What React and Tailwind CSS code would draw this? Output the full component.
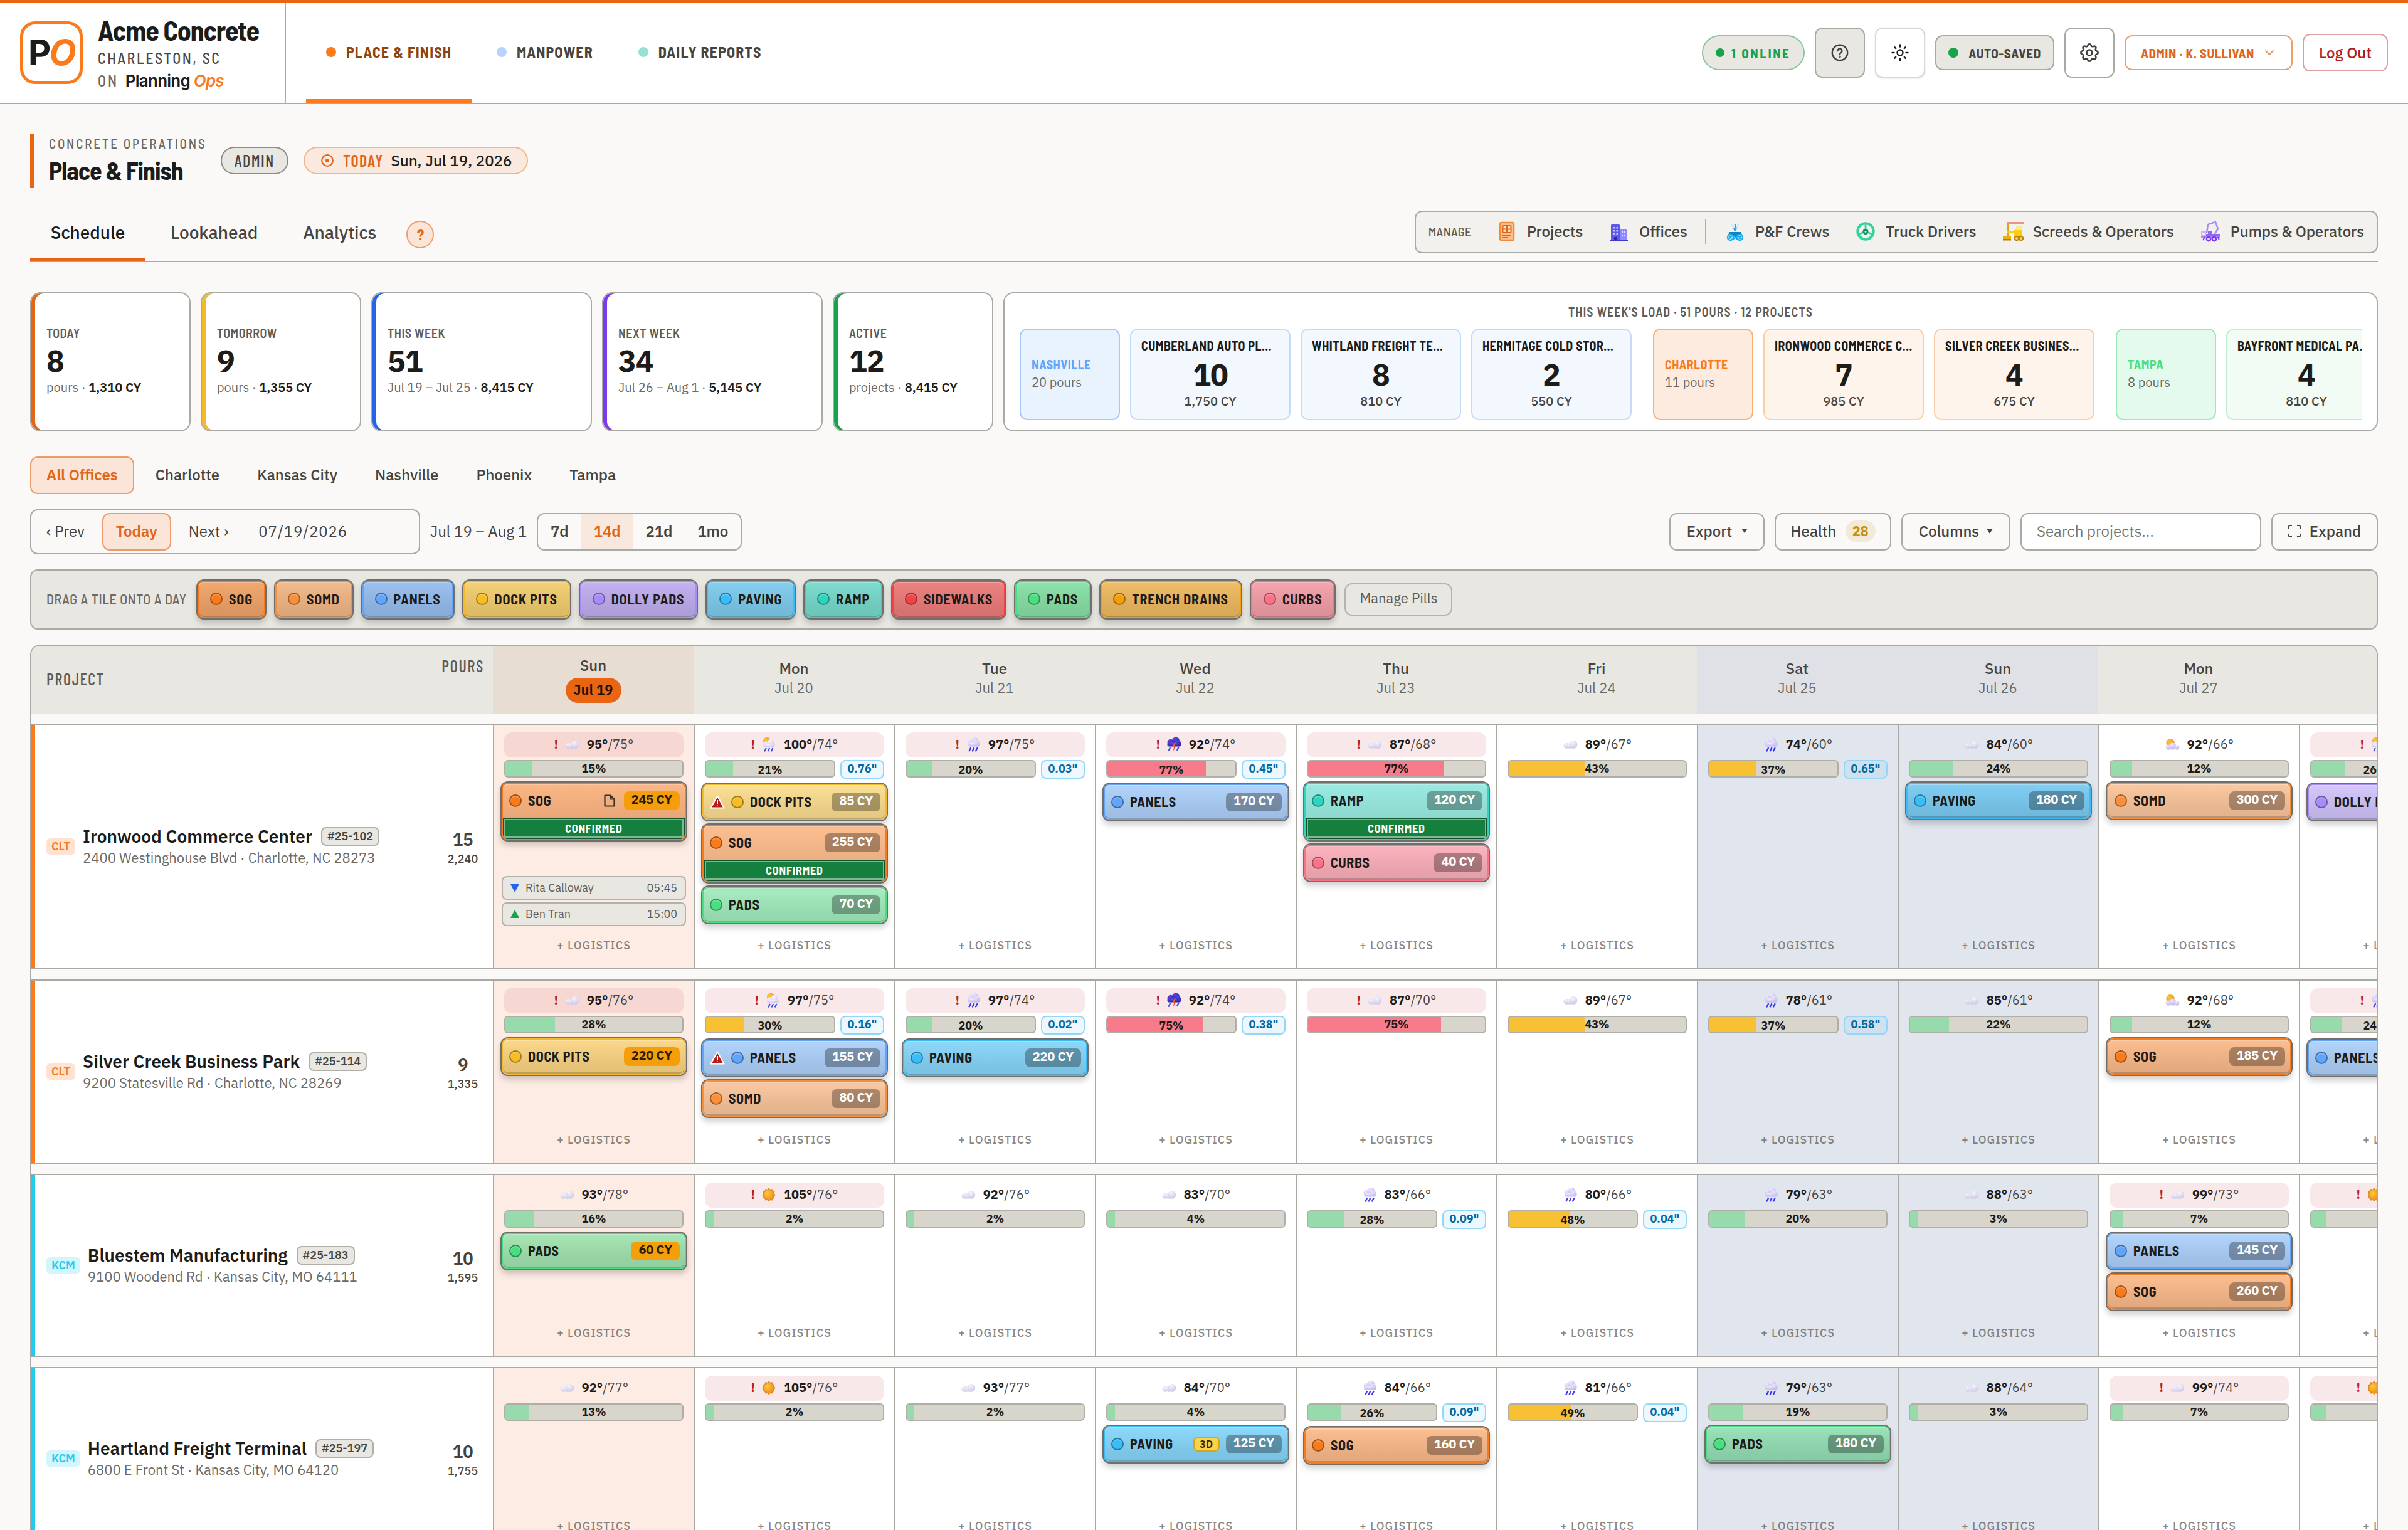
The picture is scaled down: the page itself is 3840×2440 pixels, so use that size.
const COND = "font-['Barlow_Condensed','Roboto',sans-serif] font-stretch-condensed";
const SEMI = "font-['Barlow_Semi_Condensed','Roboto',sans-serif]";

const TILE = {
  SOG: { edge: "border-[#f97a1a]", fill: "bg-[#f97a1a]", soft: "bg-[#f97a1a]/50", mid: "bg-[#f97a1a]/60" },
  SOMD: { edge: "border-[#f2903f]", fill: "bg-[#f98f3c]", soft: "bg-[#f98f3c]/50", mid: "bg-[#fb923c]/55" },
  PANELS: { edge: "border-[#60a5fa]", fill: "bg-[#60a5fa]", soft: "bg-[#60a5fa]/50", mid: "bg-[#60a5fa]/60" },
  "DOCK PITS": { edge: "border-[#f4b92a]", fill: "bg-[#f9bd24]", soft: "bg-[#fbbf24]/50", mid: "bg-[#fbbf24]/60" },
  "DOLLY PADS": { edge: "border-[#a78bfa]", fill: "bg-[#a78bfa]", soft: "bg-[#a78bfa]/50", mid: "bg-[#a78bfa]/60" },
  PAVING: { edge: "border-[#38bdf8]", fill: "bg-[#38bdf8]", soft: "bg-[#38bdf8]/60", mid: "bg-[#38bdf8]/60" },
  RAMP: { edge: "border-[#2dd4bf]", fill: "bg-[#2dd4bf]", soft: "bg-[#2dd4bf]/50", mid: "bg-[#2dd4bf]/60" },
  SIDEWALKS: { edge: "border-[#ef4444]", fill: "bg-[#ef4444]", soft: "bg-[#ef4444]/50", mid: "bg-[#ef4444]/65" },
  PADS: { edge: "border-[#4ade80]", fill: "bg-[#4ade80]", soft: "bg-[#4ade80]/50", mid: "bg-[#4ade80]/60" },
  "TRENCH DRAINS": { edge: "border-[#f59e0b]", fill: "bg-[#f59e0b]", soft: "bg-[#f59e0b]/50", mid: "bg-[#f59e0b]/60" },
  CURBS: { edge: "border-[#fb7185]", fill: "bg-[#fb7185]", soft: "bg-[#fb7185]/55", mid: "bg-[#fb7185]/60" },
};

const t = (name, cy, extra = {}) => ({ name, cy, ...extra });
const d = (icon, hi, lo, pct, rain, alert, tiles = [], extra = {}) => ({ icon, hi, lo, pct, rain, alert, tiles, ...extra });

const PROJECTS = [
  {
    code: "CLT", name: "Ironwood Commerce Center", num: "#25-102", addr: "2400 Westinghouse Blvd · Charlotte, NC 28273", pours: "15", cy: "2,240", height: "h-[392px]",
    days: [
      d("cloud", 95, 75, 15, null, true, [t("SOG", 245, { doc: true, confirmed: true })], { trucks: [["down", "Rita Calloway", "05:45"], ["up", "Ben Tran", "15:00"]] }),
      d("sunrain", 100, 74, 21, '0.76"', true, [t("DOCK PITS", 85, { warn: true }), t("SOG", 255, { confirmed: true }), t("PADS", 70)]),
      d("rain", 97, 75, 20, '0.03"', true),
      d("storm", 92, 74, 77, '0.45"', true, [t("PANELS", 170)]),
      d("cloud", 87, 68, 77, null, true, [t("RAMP", 120, { confirmed: true }), t("CURBS", 40)]),
      d("cloud", 89, 67, 43, null, false),
      d("rain", 74, 60, 37, '0.65"', false),
      d("cloud", 84, 60, 24, null, false, [t("PAVING", 180)]),
      d("suncloud", 92, 66, 12, null, false, [t("SOMD", 300)]),
      d("sunrain", 96, 71, 26, '0.12"', true, [t("DOLLY PADS", 90)]),
    ],
  },
  {
    code: "CLT", name: "Silver Creek Business Park", num: "#25-114", addr: "9200 Statesville Rd · Charlotte, NC 28269", pours: "9", cy: "1,335", height: "h-[294px]",
    days: [
      d("cloud", 95, 76, 28, null, true, [t("DOCK PITS", 220)]),
      d("sunrain", 97, 75, 30, '0.16"', true, [t("PANELS", 155, { warn: true }), t("SOMD", 80)]),
      d("rain", 97, 74, 20, '0.02"', true, [t("PAVING", 220)]),
      d("storm", 92, 74, 75, '0.38"', true),
      d("cloud", 87, 70, 75, null, true),
      d("cloud", 89, 67, 43, null, false),
      d("rain", 78, 61, 37, '0.58"', false),
      d("cloud", 85, 61, 22, null, false),
      d("suncloud", 92, 68, 12, null, false, [t("SOG", 185)]),
      d("rain", 96, 72, 24, '0.10"', true, [t("PANELS", 140)]),
    ],
  },
  {
    code: "KCM", name: "Bluestem Manufacturing", num: "#25-183", addr: "9100 Woodend Rd · Kansas City, MO 64111", pours: "10", cy: "1,595", height: "h-[292px]",
    days: [
      d("cloud", 93, 78, 16, null, false, [t("PADS", 60)]),
      d("sun", 105, 76, 2, null, true),
      d("cloud", 92, 76, 2, null, false),
      d("cloud", 83, 70, 4, null, false),
      d("rain", 83, 66, 28, '0.09"', false),
      d("rain", 80, 66, 48, '0.04"', false),
      d("rain", 79, 63, 20, null, false),
      d("cloud", 88, 63, 3, null, false),
      d("cloud", 99, 73, 7, null, true, [t("PANELS", 145), t("SOG", 260)]),
      d("sun", 101, 75, 8, null, true),
    ],
  },
  {
    code: "KCM", name: "Heartland Freight Terminal", num: "#25-197", addr: "6800 E Front St · Kansas City, MO 64120", pours: "10", cy: "1,755", height: "h-[292px]",
    days: [
      d("cloud", 92, 77, 13, null, false),
      d("sun", 105, 76, 2, null, true),
      d("cloud", 93, 77, 2, null, false),
      d("cloud", 84, 70, 4, null, false, [t("PAVING", 125, { threeD: true })]),
      d("rain", 84, 66, 26, '0.09"', false, [t("SOG", 160)]),
      d("rain", 81, 66, 49, '0.04"', false),
      d("rain", 79, 63, 19, null, false, [t("PADS", 180)]),
      d("cloud", 88, 64, 3, null, false),
      d("cloud", 99, 74, 7, null, true),
      d("sun", 101, 75, 8, null, true),
    ],
  },
];

const HEAD = [["Sun", "Jul 19"], ["Mon", "Jul 20"], ["Tue", "Jul 21"], ["Wed", "Jul 22"], ["Thu", "Jul 23"], ["Fri", "Jul 24"], ["Sat", "Jul 25"], ["Sun", "Jul 26"], ["Mon", "Jul 27"], ["Tue", "Jul 28"]];

function Defs() {
  return (
    <svg className="absolute size-0" aria-hidden="true">
      <defs>
        <radialGradient id="cloudA" cx="0.4" cy="0.25" r="0.8"><stop offset="0" stopColor="#f7f5fb" /><stop offset="1" stopColor="#cbc4e8" /></radialGradient>
        <radialGradient id="cloudB" cx="0.35" cy="0.2" r="0.9"><stop offset="0" stopColor="#efe9fb" /><stop offset="1" stopColor="#bdb2ee" /></radialGradient>
        <radialGradient id="stormA" cx="0.4" cy="0.2" r="0.9"><stop offset="0" stopColor="#5a48d8" /><stop offset="1" stopColor="#2b1fa8" /></radialGradient>
        <radialGradient id="sunA" cx="0.35" cy="0.35" r="0.8"><stop offset="0" stopColor="#fbc83a" /><stop offset="1" stopColor="#ee8a1c" /></radialGradient>
      </defs>
    </svg>
  );
}

function Weather({ kind }) {
  return (
    <svg viewBox="0 0 32 32" className="size-6 shrink-0">
      {kind === "cloud" && (
        <g fill="url(#cloudA)"><circle cx="8" cy="19" r="6" /><circle cx="15" cy="19" r="6" /><circle cx="22.500" cy="16.500" r="8.500" /></g>
      )}
      {kind === "sun" && (
        <g><path d="M16 2l3 3 4-1 1.500 4 4 1.500-1 4 3 3-3 3 1 4-4 1.500-1.500 4-4-1-3 3-3-3-4 1-1.500-4-4-1.500 1-4-3-3 3-3-1-4 4-1.500L8.500 4l4 1z" fill="#e08a1e" /><circle cx="16" cy="16.500" r="10.500" fill="url(#sunA)" /></g>
      )}
      {kind === "suncloud" && (
        <g><circle cx="12" cy="13" r="9" fill="url(#sunA)" /><g fill="url(#cloudB)"><circle cx="8" cy="22" r="5.500" /><circle cx="17" cy="20" r="7.500" /><circle cx="26" cy="22.500" r="5" /></g></g>
      )}
      {kind === "sunrain" && (
        <g><circle cx="12" cy="9" r="8" fill="url(#sunA)" /><g fill="url(#cloudA)"><circle cx="10" cy="15" r="5.500" /><circle cx="20" cy="13" r="8" /><rect x="4" y="14" width="25" height="8" rx="4" /></g><path d="M10 25l-2.500 5M17 25l-2.500 5M24 25l-2.500 5" stroke="#4a4fe0" strokeWidth="3" strokeLinecap="round" /></g>
      )}
      {kind === "rain" && (
        <g><g fill="url(#cloudB)"><circle cx="10" cy="12" r="6.500" /><circle cx="19" cy="9" r="8" /><circle cx="24" cy="14" r="6" /><rect x="4" y="12" width="26" height="8.500" rx="4" /></g><path d="M10.500 24l-3 6M17.500 24l-3 6M24.500 24l-3 6" stroke="#3d3df0" strokeWidth="3.200" strokeLinecap="round" /></g>
      )}
      {kind === "storm" && (
        <g><g fill="url(#stormA)"><circle cx="9" cy="12" r="7" /><circle cx="20" cy="8.500" r="8" /><circle cx="25" cy="14" r="6" /><rect x="2" y="12" width="29" height="8.500" rx="4" /></g><path d="M17 13l-5 9h4l-2 9 7-11h-4l3-7z" fill="#f0563a" /><path d="M8 23l-3 6M26 22l-3 6" stroke="#4a4fe8" strokeWidth="3" strokeLinecap="round" /></g>
      )}
    </svg>
  );
}

function ManageIcon({ kind }) {
  return (
    <svg viewBox="0 0 36 36" className="size-9 shrink-0">
      {kind === "projects" && (
        <g><rect x="7" y="4" width="22" height="28" rx="2.500" fill="#ffc08a" stroke="#f28a3c" strokeWidth="2.500" /><rect x="11.500" y="9" width="13" height="11" rx="1.500" fill="#ffe2c7" stroke="#e0661a" strokeWidth="2" /><path d="M18 9v11M11.500 14.500h13" stroke="#e0661a" strokeWidth="2" /><path d="M12 24.500h11M12 28h7" stroke="#e0661a" strokeWidth="2" strokeLinecap="round" /></g>
      )}
      {kind === "offices" && (
        <g><path d="M5 8.500a2 2 0 0 1 2-2h10a2 2 0 0 1 2 2V32H5z" fill="#5b5be6" /><path d="M19 14h9a2 2 0 0 1 2 2v16H19z" fill="#8f8bff" /><path d="M8.500 11h2.500v2.500H8.500zM13.500 11H16v2.500h-2.500zM8.500 16h2.500v2.500H8.500zM13.500 16H16v2.500h-2.500zM8.500 21h2.500v2.500H8.500zM13.500 21H16v2.500h-2.500z" fill="#c7c6ff" /><path d="M22 18h2v2.500h-2zM26 18h2v2.500h-2zM22 23h2v2.500h-2zM26 23h2v2.500h-2z" fill="#e6e5ff" /><path d="M10 27h4.500v5H10z" fill="#2f2aa0" /><path d="M4 31h28v2.500H4z" fill="#4038c8" /></g>
      )}
      {kind === "crews" && (
        <g><path d="M18 6v9" stroke="#2aa3ea" strokeWidth="2.200" /><path d="M12.500 6l4 8M23.500 6l-4 8" stroke="#c5e9fc" strokeWidth="2" /><path d="M15 12h6l-1.500 6h-3z" fill="#2aa3ea" /><path d="M9 19h18l3 6H6z" fill="#1183c4" /><g fill="#bfe9ff" stroke="#1bb0f0" strokeWidth="2.500"><circle cx="10.500" cy="27.500" r="4.500" /><circle cx="25.500" cy="27.500" r="4.500" /></g><path d="M15 24.500l6 6M21 24.500l-6 6M8.500 25.500l4 4M12.500 25.500l-4 4M23.500 25.500l4 4M27.500 25.500l-4 4" stroke="#0ea5e9" strokeWidth="1.800" /></g>
      )}
      {kind === "drivers" && (
        <g fill="none"><circle cx="18" cy="18" r="12.700" stroke="#34d39c" strokeWidth="4" /><path d="M18 6v9M7 22.500l8-3M29 22.500l-8-3" stroke="#34d39c" strokeWidth="2.800" /><circle cx="18" cy="18.500" r="4.500" fill="#0b8f66" /><circle cx="18" cy="18.500" r="1.500" fill="#bff3df" /></g>
      )}
      {kind === "screeds" && (
        <g><path d="M9 4.500h26" stroke="#f2706a" strokeWidth="2.500" /><path d="M10 5v20" stroke="#e0a21a" strokeWidth="2.500" /><path d="M9 17h10l4-2h10v12H20v-6H9z" fill="#facc15" /><path d="M23 10h9v6h-9z" fill="#fdea8a" /><path d="M2 26h13v5H2z" fill="#eab308" /><path d="M2 30h13v2.500H2z" fill="#b07d0a" /><g fill="#f5d76a" stroke="#b8860b" strokeWidth="2.200"><circle cx="24" cy="29" r="3.200" /><circle cx="31" cy="29" r="3.200" /></g></g>
      )}
      {kind === "pumps" && (
        <g><path d="M12 21L14 7l12-4 4 11-6 9" fill="none" stroke="#a78bfa" strokeWidth="2.500" strokeLinejoin="round" /><path d="M3 18h8v9H3z" fill="#c4b5fd" /><path d="M5 20h4v3H5z" fill="#f0ebff" /><path d="M11 22h22v5H11zM14 17h7v6h-7z" fill="#9269f5" /><path d="M3 25h30v3H3z" fill="#a78bfa" /><path d="M9 27l-3 5M30 27l2 5" stroke="#7c3aed" strokeWidth="2" /><g fill="#ddd2ff" stroke="#7c3aed" strokeWidth="2.400"><circle cx="15" cy="30" r="3.200" /><circle cx="24" cy="30" r="3.200" /></g></g>
      )}
    </svg>
  );
}

function Header() {
  return (
    <header className="flex h-[166px] items-stretch border-t-4 border-b-2 border-t-[#ea6513] border-b-[#a9a9a5] bg-white">
      <div className="flex w-[456px] items-center gap-6 border-r-2 border-[#a9a9a5] pl-8">
        <div className="flex size-[100px] items-center justify-center rounded-3xl border-[5px] border-[#fb7a1c] bg-white font-['Inter',sans-serif] text-[56px] leading-none font-bold tracking-[-0.05em] text-[#1c1c1a]">
          P<span className="text-[#fb7a1c] italic">O</span>
        </div>
        <div className="flex flex-col whitespace-nowrap">
          <div className={`${SEMI} flex h-[54px] items-center text-[44px] font-bold tracking-[-0.025em] text-[#1c1c1a]`}>Acme Concrete</div>
          <div className={`${SEMI} flex h-9 items-center text-[24px] font-medium tracking-[0.105em] text-[#4a4a46]`}>CHARLESTON, SC</div>
          <div className={`${SEMI} flex h-9 items-center gap-2 text-[24px] font-medium tracking-[0.12em] text-[#6b6a66]`}>
            ON
            <span className="ml-[3px] font-['Inter',sans-serif] text-[26px] font-semibold tracking-[-0.03em] text-[#1c1c1a]">Planning <span className="text-[#fb7a1c] italic">Ops</span></span>
          </div>
        </div>
      </div>
      <nav className={`${SEMI} ml-8 flex items-stretch gap-2 text-[24px] font-bold tracking-[0.047em] whitespace-nowrap text-[#45443f]`}>
        {[["PLACE & FINISH", "bg-[#fb7a1c]", true], ["MANPOWER", "bg-[#b7d5fb]"], ["DAILY REPORTS", "bg-[#97e0d2]"]].map(([label, dot, on]) => (
          <div key={label} className={`flex items-center gap-4 border-b-[6px] px-8 pt-1 ${on ? "w-[264px] border-[#fb7a1c] text-[#8f430d]" : "border-transparent"}`}>
            <span className={`size-4 shrink-0 rounded-full ${dot}`} />{label}
          </div>
        ))}
      </nav>
      <div className={`${SEMI} ml-auto flex items-center gap-4 pr-8 font-bold whitespace-nowrap`}>
        <div className="flex h-14 w-[164px] items-center gap-[11px] rounded-full border-2 border-[#86c7a0] bg-[#e8e7e2] pl-5 text-[21px] tracking-[0.125em] text-[#16a34a]"><span className="size-3.5 rounded-full bg-[#16a34a]" />1 ONLINE</div>
        <div className="flex size-20 items-center justify-center rounded-xl border-2 border-[#a9a9a5] bg-[#e8e7e2] text-[#3f3e3a]">
          <svg viewBox="0 0 28 28" className="size-7" fill="none" stroke="currentColor" strokeWidth="2.400" strokeLinecap="round"><circle cx="14" cy="14" r="12.200" /><path d="M10.500 11a3.500 3.500 0 1 1 5.400 3c-1.300.8-1.900 1.400-1.900 2.700" /><circle cx="14" cy="20.300" r="0.600" fill="currentColor" /></svg>
        </div>
        <div className="flex size-20 items-center justify-center rounded-xl border-2 border-[#d8d8d6] bg-white text-[#1c1c1a] shadow-sm">
          <svg viewBox="0 0 28 28" className="size-7" fill="none" stroke="currentColor" strokeWidth="2.400" strokeLinecap="round"><circle cx="14" cy="14" r="4.500" /><path d="M14 1.500v3M14 23.500v3M1.500 14h3M23.500 14h3M5.200 5.200l2 2M20.800 20.800l2 2M5.200 22.800l2-2M20.800 7.200l2-2" /></svg>
        </div>
        <div className="flex h-14 w-[190px] items-center justify-center gap-4 rounded-xl border-2 border-[#a9a9a5] bg-[#e8e7e2] text-[21px] tracking-[0.03em] text-[#45443f]"><span className="size-4 rounded-full bg-[#16a34a]" />AUTO-SAVED</div>
        <div className="flex size-20 items-center justify-center rounded-xl border-2 border-[#a9a9a5] bg-white text-[#3f3e3a]">
          <svg viewBox="0 0 24 24" className="size-9" fill="none" stroke="currentColor" strokeWidth="1.700" strokeLinejoin="round"><circle cx="12" cy="12" r="3" /><path d="M10.300 3.500c.4-1.700 3-1.700 3.400 0a1.750 1.750 0 0 0 2.600 1.100c1.500-.9 3.300.8 2.400 2.400a1.750 1.750 0 0 0 1.100 2.600c1.700.4 1.700 3 0 3.400a1.750 1.750 0 0 0-1.100 2.600c.9 1.500-.8 3.300-2.400 2.400a1.750 1.750 0 0 0-2.600 1.100c-.4 1.700-3 1.700-3.400 0a1.750 1.750 0 0 0-2.600-1.100c-1.500.9-3.300-.8-2.400-2.400a1.750 1.750 0 0 0-1.100-2.600c-1.700-.4-1.700-3 0-3.400a1.750 1.750 0 0 0 1.100-2.600c-.9-1.500.8-3.300 2.400-2.400 1 .6 2.300.1 2.600-1.100z" transform="translate(0 0.700)" /></svg>
        </div>
        <div className="flex h-14 w-[268px] items-center gap-4 rounded-xl border-2 border-[#eba06a] bg-white pl-6 text-[21px] tracking-[0.023em] text-[#e0661a]">ADMIN · K. SULLIVAN
          <svg viewBox="0 0 16 10" className="h-2.5 w-4" fill="none" stroke="#e8935c" strokeWidth="2" strokeLinecap="round" strokeLinejoin="round"><path d="M2 2l6 6 6-6" /></svg>
        </div>
        <div className="flex h-[60px] w-[136px] items-center justify-center rounded-xl border-2 border-[#dca0a4] bg-white font-['IBM_Plex_Sans','Noto_Sans',sans-serif] text-[24px] font-medium text-[#b01c22]">Log Out</div>
      </div>
    </header>
  );
}

function TitleRow() {
  return (
    <div className="mt-12 flex h-[86px] items-center gap-6">
      <div className="flex w-[280px] flex-col border-l-[6px] border-[#ea6513] pl-6 whitespace-nowrap">
        <div className={`${SEMI} flex h-7 items-center text-[21px] font-medium tracking-[0.133em] text-[#6b6a66]`}>CONCRETE OPERATIONS</div>
        <h1 className={`${SEMI} flex h-[58px] items-center text-[40px] font-bold tracking-[-0.025em] text-[#1c1c1a]`}>Place & Finish</h1>
      </div>
      <div className={`${COND} -mt-0.5 flex h-11 w-[108px] items-center justify-center rounded-full border-2 border-[#8c8b86] bg-[#e8e7e2] text-[26px] font-medium tracking-[0.06em] text-[#45443f]`}>ADMIN</div>
      <div className={`${COND} -mt-0.5 flex h-11 w-[358px] items-center gap-[15px] rounded-full border-2 border-[#f0b78c] bg-[#f9e9de] pl-[26px] text-[26px] font-semibold tracking-[0.053em] whitespace-nowrap text-[#e0661a]`}>
        <svg viewBox="0 0 20 20" className="size-5" fill="none" stroke="currentColor" strokeWidth="2.200"><circle cx="10" cy="10" r="8.800" /><circle cx="10" cy="10" r="3" fill="currentColor" stroke="none" /></svg>
        TODAY<span className="-ml-[3px] font-['IBM_Plex_Sans','Noto_Sans',sans-serif] text-[24px] font-medium tracking-normal text-[#1c1c1a]">Sun, Jul 19, 2026</span>
      </div>
    </div>
  );
}

function TabRow() {
  return (
    <div className="mt-9 flex h-[82px] items-start border-b-2 border-[#a9a9a5]">
      <div className="-mb-0.5 flex h-20 items-stretch gap-2 text-[28px] font-medium tracking-[-0.003em] text-[#45443f]">
        <div className="flex w-[184px] items-center justify-center border-b-4 border-[#ea6513] pb-1.5 text-[#1c1c1a]">Schedule</div>
        <div className="flex items-center border-b-4 border-transparent px-8 pb-1.5">Lookahead</div>
        <div className="flex items-center border-b-4 border-transparent px-8 pb-1.5">Analytics</div>
        <div className={`${SEMI} -mt-1 ml-2 flex size-11 items-center justify-center self-center rounded-full border-2 border-[#ee9c6a] bg-[#fbe5d8] text-[24px] font-bold text-[#e0661a]`}>?</div>
      </div>
      <div className="ml-auto flex h-[68px] items-center gap-2 rounded-xl border-2 border-[#a9a9a5] bg-[#f2f1ed] pr-1 pb-0.5 pl-5 text-[24px] font-medium tracking-[-0.003em] text-[#45443f]">
        <span className={`${SEMI} mr-3.5 text-[20px] font-medium tracking-[0.025em] text-[#5d5c57]`}>MANAGE</span>
        <ManageItem icon="projects" label="Projects" />
        <ManageItem icon="offices" label="Offices" />
        <span className="mx-1 h-10 w-0.5 bg-[#b0b0ab]" />
        <ManageItem icon="crews" label="P&F Crews" />
        <ManageItem icon="drivers" label="Truck Drivers" />
        <ManageItem icon="screeds" label="Screeds & Operators" />
        <ManageItem icon="pumps" label="Pumps & Operators" />
      </div>
    </div>
  );
}

function ManageItem({ icon, label }) {
  return <div className="flex items-center gap-3.5 px-4 whitespace-nowrap"><ManageIcon kind={icon} />{label}</div>;
}

function Stat({ label, value, note, cy, wide, accent }) {
  return (
    <div className={`flex flex-col justify-center rounded-2xl border-2 border-[#a9a9a5] bg-white pb-1 pl-6 whitespace-nowrap ${wide ? "w-[352px]" : "w-64"} ${accent}`}>
      <div className={`${SEMI} mb-1.5 flex h-6 items-center text-[20px] font-semibold tracking-[0.025em] text-[#5d5c57]`}>{label}</div>
      <div className="mb-1 flex h-[52px] items-center text-[48px] font-bold tracking-[-0.02em] text-[#1c1c1a]">{value}</div>
      <div className="flex h-[26px] items-center text-[20px] text-[#6b6a66]">{note} ·&nbsp;<span className="font-semibold text-[#1c1c1a]">{cy} CY</span></div>
    </div>
  );
}

const LOADS = [
  { office: "NASHVILLE", pours: "20 pours", head: "border-[#a6c9f6] bg-[#e8f3fd]", text: "text-[#60a5fa]", tile: "border-[#c5dbf7] bg-[#f3f8fe]", items: [["CUMBERLAND AUTO PL…", "10", "1,750"], ["WHITLAND FREIGHT TE…", "8", "810"], ["HERMITAGE COLD STOR…", "2", "550"]] },
  { office: "CHARLOTTE", pours: "11 pours", head: "border-[#f8b07a] bg-[#feebe0]", text: "text-[#f97a1a]", tile: "border-[#f9cfab] bg-[#fff4ec]", items: [["IRONWOOD COMMERCE C…", "7", "985"], ["SILVER CREEK BUSINES…", "4", "675"]] },
  { office: "TAMPA", pours: "8 pours", head: "border-[#9be8b8] bg-[#e4faec]", text: "text-[#4ade80]", tile: "border-[#bdefcf] bg-[#f2fcf5]", items: [["BAYFRONT MEDICAL PA…", "4", "810"]] },
];

function Stats() {
  return (
    <div className="mt-12 flex h-[222px] items-stretch gap-4">
      <Stat label="TODAY" value="8" note="pours" cy="1,310" accent="shadow-[inset_6px_0_0_#e0661a]" />
      <Stat label="TOMORROW" value="9" note="pours" cy="1,355" accent="shadow-[inset_6px_0_0_#f5b92a]" />
      <Stat wide label="THIS WEEK" value="51" note="Jul 19 – Jul 25" cy="8,415" accent="shadow-[inset_6px_0_0_#2563eb]" />
      <Stat wide label="NEXT WEEK" value="34" note="Jul 26 – Aug 1" cy="5,145" accent="shadow-[inset_6px_0_0_#7c3aed]" />
      <Stat label="ACTIVE" value="12" note="projects" cy="8,415" accent="shadow-[inset_6px_0_0_#16a34a]" />
      <div className="flex min-w-0 flex-1 flex-col rounded-2xl border-2 border-[#a9a9a5] bg-white px-6 pt-3.5 pb-4">
        <div className={`${SEMI} mb-3 flex h-[30px] items-center justify-center text-[20px] font-semibold tracking-[0.05em] text-[#5d5c57]`}>THIS WEEK'S LOAD · 51 POURS · 12 PROJECTS</div>
        <div className="flex min-w-0 flex-1 gap-[34px] overflow-hidden">
          {LOADS.map((g) => (
            <div key={g.office} className="flex shrink-0 gap-4">
              <div className={`flex w-40 flex-col justify-center gap-1 rounded-xl border-2 pb-0.5 pl-[17px] ${g.head}`}>
                <div className={`${SEMI} flex h-6 items-center text-[20px] font-bold tracking-[0.025em] ${g.text}`}>{g.office}</div>
                <div className="flex h-[26px] items-center text-[20px] text-[#6b6a66]">{g.pours}</div>
              </div>
              {g.items.map(([name, n, cy]) => (
                <div key={name} className={`flex w-64 flex-col items-center justify-center rounded-xl border-2 pb-0.5 ${g.tile}`}>
                  <div className={`${SEMI} mb-2 flex h-6 w-full items-center pl-4 text-[20px] font-bold tracking-[0.025em] whitespace-nowrap text-[#1c1c1a]`}>{name}</div>
                  <div className="mb-1 flex h-[52px] items-center text-[48px] font-bold tracking-[-0.02em] text-[#1c1c1a]">{n}</div>
                  <div className="flex h-[26px] items-center text-[20px] font-medium text-[#45443f]">{cy} CY</div>
                </div>
              ))}
            </div>
          ))}
        </div>
      </div>
    </div>
  );
}

function Offices() {
  return (
    <div className="mt-10 flex h-[60px] items-center gap-2 text-[24px] font-medium text-[#45443f]">
      <div className="flex h-[60px] items-center rounded-xl border-2 border-[#ec9c6a] bg-[#fae5d8] px-6 pb-0.5 font-semibold text-[#e0661a]">All Offices</div>
      {["Charlotte", "Kansas City", "Nashville", "Phoenix", "Tampa"].map((o) => <div key={o} className="px-[26px] pb-0.5">{o}</div>)}
    </div>
  );
}

const CONTROL = "flex h-[60px] shrink-0 items-center justify-center rounded-xl border-2 border-[#a9a9a5] pb-0.5 text-[24px] font-medium text-[#45443f]";

function Toolbar() {
  return (
    <div className="mt-6 flex h-[72px] items-center gap-4 text-[24px] whitespace-nowrap text-[#45443f]">
      <div className="flex h-[72px] w-[622px] items-center gap-2 rounded-xl border-2 border-[#a9a9a5] px-1">
        <div className="px-5 pb-0.5">‹ Prev</div>
        <div className="flex h-[60px] items-center rounded-xl border-2 border-[#ec9c6a] bg-[#fae5d8] px-5 pb-0.5 font-semibold text-[#e0661a]">Today</div>
        <div className="px-5 pb-0.5">Next ›</div>
        <div className="pb-0.5 pl-5 tracking-[0.034em]">07/19/2026</div>
      </div>
      <div className="pb-0.5">Jul 19 – Aug 1</div>
      <div className="flex h-[60px] items-stretch overflow-hidden rounded-xl border-2 border-[#a9a9a5] font-semibold tracking-[-0.005em]">
        {["7d", "14d", "21d", "1mo"].map((r) => <div key={r} className={`flex items-center px-5 pb-0.5 ${r === "14d" ? "bg-[#f8e8dd] text-[#e0661a]" : ""}`}>{r}</div>)}
      </div>
      <div className="ml-auto flex gap-4">
        <div className={`${CONTROL} w-[152px] gap-4`}>Export<svg viewBox="0 0 8 8" className="size-2"><path d="M0 1h8L4 7z" fill="currentColor" /></svg></div>
        <div className={`${CONTROL} w-[186px] gap-3.5`}>Health<span className="flex h-[34px] w-12 items-center justify-center rounded-full bg-[#f1ead8] text-[22px] font-bold tracking-[-0.02em] text-[#c9900f]">28</span></div>
        <div className={`${CONTROL} w-[174px] gap-3`}>Columns<svg viewBox="0 0 10 10" className="size-2.5"><path d="M0 1h10L5 9z" fill="currentColor" /></svg></div>
        <div className="flex h-[60px] w-96 items-center rounded-xl border-2 border-[#a9a9a5] bg-white pb-0.5 pl-6 text-[#757570]">Search projects...</div>
        <div className={`${CONTROL} w-[170px] gap-3.5`}>
          <svg viewBox="0 0 20 20" className="size-5" fill="none" stroke="currentColor" strokeWidth="2"><path d="M1 6V3a2 2 0 0 1 2-2h3M14 1h3a2 2 0 0 1 2 2v3M19 14v3a2 2 0 0 1-2 2h-3M6 19H3a2 2 0 0 1-2-2v-3" /></svg>
          Expand
        </div>
      </div>
    </div>
  );
}

function Dot({ name }) {
  return <span className={`size-5 shrink-0 rounded-full border-2 border-black/35 shadow-[inset_0_2px_1px_rgba(255,255,255,0.25)] ${TILE[name].fill}`} />;
}

const GLOSS = "bg-linear-to-b from-white/5 to-black/10";
const RAISED = "shadow-[0_0_0_2px_#706f6b,0_6px_10px_2px_rgba(0,0,0,0.18),inset_0_2px_0_rgba(255,255,255,0.25),inset_0_-2px_0_rgba(0,0,0,0.18)]";

function Palette() {
  return (
    <div className="mt-6 flex h-24 items-center gap-4 rounded-xl border-2 border-[#a9a9a5] bg-[#e8e7e2] pl-6 whitespace-nowrap">
      <div className={`${SEMI} w-[225px] pb-0.5 text-[22px] font-medium tracking-[0.025em] text-[#6b6a66]`}>DRAG A TILE ONTO A DAY</div>
      {Object.keys(TILE).map((n) => (
        <div key={n} className={`${SEMI} ${TILE[n].edge} ${TILE[n].mid} ${GLOSS} ${RAISED} flex h-[60px] items-center gap-2.5 rounded-[10px] border-2 bg-clip-padding pr-[18px] pb-0.5 pl-[18px] text-[22px] font-bold tracking-[0.038em] text-[#1c1c1a]`}><Dot name={n} />{n}</div>
      ))}
      <div className="flex h-[52px] items-center rounded-xl border-2 border-[#b5b4af] px-[22px] pb-1 text-[22px] text-[#5d5c57]">Manage Pills</div>
    </div>
  );
}

function Tile({ tile, today }) {
  const c = TILE[tile.name];
  return (
    <div className={`${c.edge} ${c.soft} ${GLOSS} ${RAISED} overflow-hidden rounded-[10px] border-2 bg-clip-padding`}>
      <div className="flex h-[54px] items-center gap-2.5 pr-2 pb-px pl-2.5">
        {tile.warn && <svg viewBox="0 0 24 22" className="h-[22px] w-6 shrink-0"><path d="M12 1.500L22.500 20.500H1.500z" fill="#b91c1c" stroke="#fff" strokeWidth="2" strokeLinejoin="round" /><path d="M12 8v6M12 16.500v1.500" stroke="#fff" strokeWidth="2" /></svg>}
        <Dot name={tile.name} />
        <span className={`${SEMI} mr-auto pb-0.5 text-[22px] font-bold tracking-[0.03em] whitespace-nowrap text-[#1c1c1a]`}>{tile.name}</span>
        {tile.doc && <svg viewBox="0 0 18 20" className="mr-1 h-5 w-[18px]" fill="none" stroke="#33312c" strokeWidth="2.200" strokeLinejoin="round"><path d="M1.500 1.500h9l6 6v11h-15zM10.500 1.500v6h6" /></svg>}
        {tile.threeD && <span className="flex h-6 w-[42px] items-center justify-center rounded-lg border-2 border-[#d9a514] bg-[#fcd34d] text-[16px] font-bold text-[#3b2f05]">3D</span>}
        <span className={`flex h-[30px] shrink-0 items-center rounded-lg px-3 pb-[3px] text-[20px] font-bold tracking-[-0.01em] whitespace-nowrap ${today ? "bg-[#f59e0b] text-[#2a1c05]" : "bg-black/30 text-white"}`}>{tile.cy} CY</span>
      </div>
      {tile.confirmed && <div className={`${SEMI} flex h-[34px] items-center justify-center border-2 border-[#14532d] bg-[#15803d] text-[18px] font-bold tracking-[0.05em] text-white shadow-[inset_0_0_0_2px_rgba(255,255,255,0.45)]`}>CONFIRMED</div>}
    </div>
  );
}

function Day({ day, index }) {
  const bg = index === 0 ? "bg-[#fdece4]" : index === 6 || index === 7 ? "bg-[#e1e5ee]" : "bg-white";
  const fill = day.pct >= 60 ? "bg-[#f87b8c]" : day.pct >= 30 ? "bg-[#f8c033]" : "bg-[#97dbad]";
  return (
    <div className={`flex w-80 shrink-0 flex-col border-l-2 border-[#a9a8a2] px-3 pt-3 pb-[23px] ${bg}`}>
      <div className={`mx-1 flex h-10 items-center justify-center rounded-xl pb-0.5 text-[20px] ${day.alert ? "bg-[#be1e32]/10" : ""}`}>
        {day.alert && <span className="mr-2.5 font-bold text-[#c01c1c]">!</span>}
        <Weather kind={day.icon} />
        <span className="ml-3 font-bold text-[#1c1c1a]">{day.hi}°</span><span className="text-[#45443f]">/{day.lo}°</span>
      </div>
      <div className="mx-1 mt-1 flex items-start gap-2">
        <div className="relative h-7 flex-1 overflow-hidden rounded-md border-2 border-[#b0aea7] bg-[#d8d5cc]">
          <div className={`h-full min-w-3 ${fill}`} style={{ width: `${day.pct}%` }} />
          <div className={`absolute inset-0 flex items-center justify-center text-[18px] font-bold text-[#1c1c1a] ${day.rain ? "pt-[3px]" : ""}`}>{day.pct}%</div>
        </div>
        {day.rain && <div className="flex h-[30px] w-[70px] items-center justify-center rounded-lg border-2 border-[#93d6f7] bg-[#0ea5e9]/8 pb-0.5 text-[18px] font-bold text-[#0369a1]">{day.rain}</div>}
      </div>
      <div className="mt-2 flex flex-col gap-[7px]">
        {day.tiles.map((tile) => <Tile key={tile.name} tile={tile} today={index === 0} />)}
      </div>
      <div className="mt-auto flex flex-col gap-1">
        {day.trucks?.map(([dir, who, at]) => (
          <div key={who} className="flex h-[38px] items-center rounded-lg border-2 border-[#b3b1ab] bg-[#e8e7e2] px-3 text-[18px] text-[#5d5c57]">
            <svg viewBox="0 0 14 14" className="mr-2.5 size-3.5"><path d={dir === "down" ? "M0 1h14L7 14z" : "M0 13h14L7 0z"} fill={dir === "down" ? "#2563eb" : "#16a34a"} /></svg>
            {who}<span className="ml-auto">{at}</span>
          </div>
        ))}
        <div className={`flex h-[26px] items-center justify-center text-[18px] font-medium tracking-[0.055em] text-[#55534e]/70 ${day.trucks ? "mt-3.5" : ""}`}>+ LOGISTICS</div>
      </div>
    </div>
  );
}

function Schedule() {
  return (
    <div className="mt-6 flex flex-1 flex-col gap-4 overflow-hidden rounded-t-2xl border-2 border-b-0 border-[#a9a9a5]">
      <div className="flex h-[108px] shrink-0 bg-[#e8e7e2]">
        <div className={`${COND} flex w-[736px] shrink-0 items-center justify-between pr-3.5 pb-0.5 pl-6 text-[26px] font-medium tracking-[0.066em] text-[#5d5c57]`}>
          <span>PROJECT</span><span className="mt-5 flex h-6 items-center self-start">POURS</span>
        </div>
        {HEAD.map(([day, date], i) => (
          <div key={date} className={`flex w-80 shrink-0 flex-col items-center ${i === 0 ? "bg-[#e8ddd2]" : i === 6 || i === 7 ? "bg-[#dfe1e6]" : ""}`}>
            <div className={`flex h-8 items-center text-[24px] font-medium text-[#45443f] ${i === 0 ? "mt-[15px]" : "mt-5"}`}>{day}</div>
            {i === 0
              ? <div className="mt-1 flex h-10 items-center rounded-full bg-[#ea6513] px-[13px] pb-0.5 text-[22px] font-semibold text-[#1c1206]">{date}</div>
              : <div className="flex h-[30px] items-center text-[22px] text-[#6b6a66]">{date}</div>}
          </div>
        ))}
      </div>
      {PROJECTS.map((p) => (
        <div key={p.name} className={`flex shrink-0 border-y-2 border-[#a9a8a2] ${p.height}`}>
          <div className={`flex w-[736px] shrink-0 items-center border-l-[6px] bg-white pl-[18px] ${p.code === "CLT" ? "border-l-[#fb7a1c]" : "border-l-[#22ccee]"}`}>
            <span className={`mr-3 flex h-[26px] items-center rounded-md px-2 text-[18px] font-semibold ${p.code === "CLT" ? "bg-[#fee3d3] text-[#fb7a1c]" : "bg-[#d3f6fd] text-[#22ccee]"}`}>{p.code}</span>
            <div className="flex flex-1 flex-col gap-0.5 whitespace-nowrap">
              <div className="flex h-[34px] items-center gap-3.5 text-[28px] font-semibold text-[#1c1c1a]">{p.name}
                <span className="flex h-[30px] items-center rounded-lg border-2 border-[#b0aea7] bg-[#e8e7e2] px-[8px] text-[18px] font-semibold text-[#45443f]">{p.num}</span>
              </div>
              <div className="flex h-[30px] items-center text-[22px] text-[#6b6a66]">{p.addr}</div>
            </div>
            <div className="flex w-24 flex-col items-center gap-0.5 pt-1 text-[#45443f]">
              <div className="flex h-[34px] items-center text-[28px] font-semibold tracking-[-0.02em]">{p.pours}</div>
              <div className="flex h-6 items-center text-[18px] font-medium">{p.cy}</div>
            </div>
          </div>
          {p.days.map((day, i) => <Day key={i} day={day} index={i} />)}
        </div>
      ))}
    </div>
  );
}

export default function App() {
  return (
    <div className="flex h-[2440px] w-[3840px] flex-col overflow-hidden bg-[#faf9f7] font-['IBM_Plex_Sans','Noto_Sans',sans-serif] leading-none">
      <Defs />
      <Header />
      <main className="flex flex-1 flex-col overflow-hidden px-12">
        <TitleRow />
        <TabRow />
        <Stats />
        <Offices />
        <Toolbar />
        <Palette />
        <Schedule />
      </main>
    </div>
  );
}
